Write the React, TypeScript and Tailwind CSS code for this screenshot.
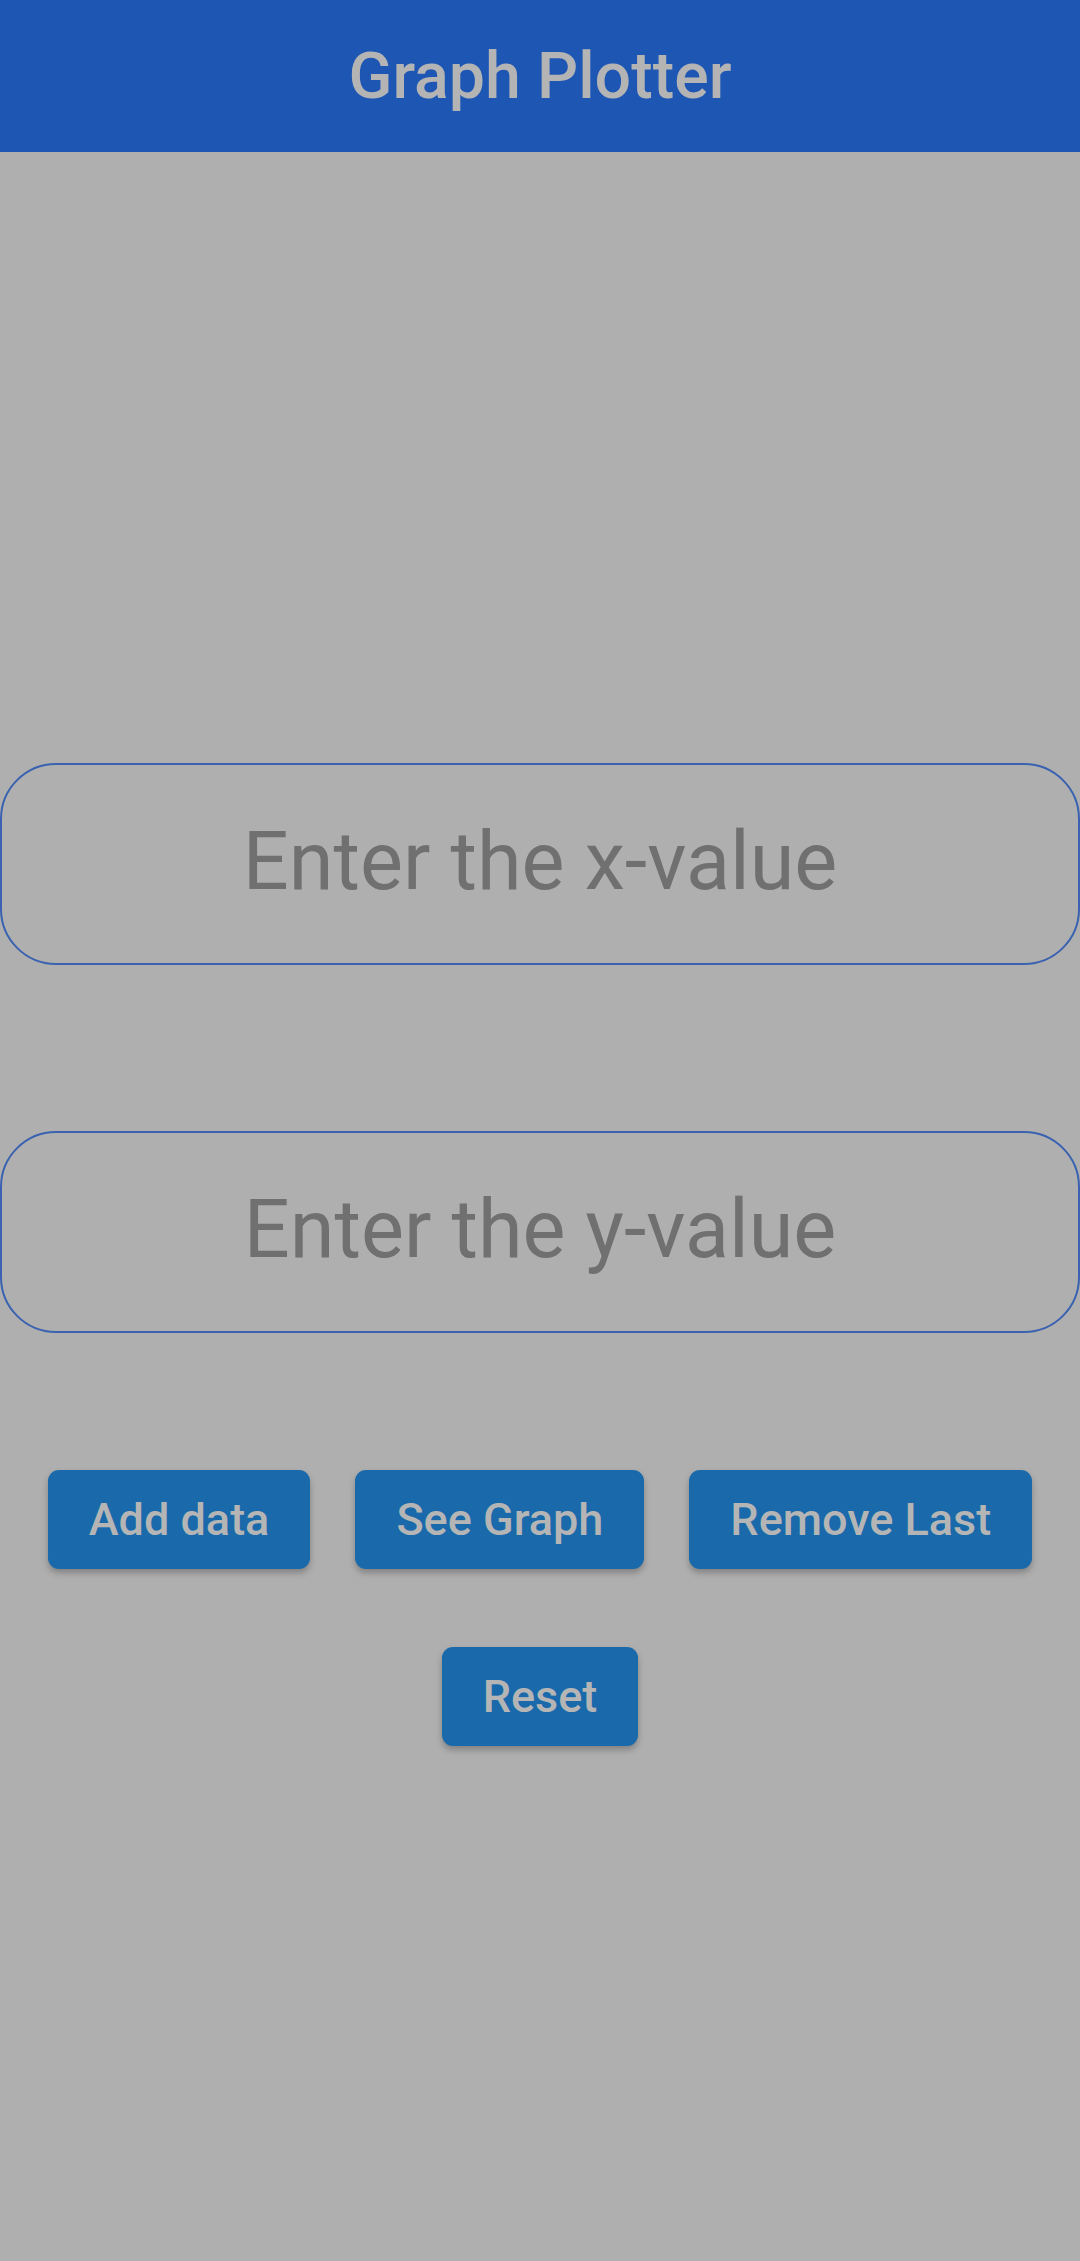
export default function App() {
  const btn =
    "h-[99px] rounded-[11px] bg-[#1a6aab] px-[41px] text-[45px] font-medium text-[#b5b5b5] shadow-[0_4px_6px_rgba(0,0,0,0.25)]";
  const field =
    "h-[202px] w-full rounded-[56px] border-2 border-[#3a62b0] bg-transparent pb-[6px] text-center text-[81px] text-[#707070] outline-none placeholder:text-[#707070]";
  return (
    <div className="min-h-[2261px] bg-[#afafaf] font-['Roboto',sans-serif]">
      <header className="flex h-[152px] items-center justify-center bg-[#1e56b4]">
        <h1 className="text-[64.5px] font-medium text-[#b4b4b4]">Graph Plotter</h1>
      </header>

      <main className="flex flex-col pt-[611px]">
        <input className={field} placeholder="Enter the x-value" />
        <input className={`mt-[166px] ${field}`} placeholder="Enter the y-value" />

        <div className="mt-[137px] flex justify-center gap-[45px]">
          <button className={btn}>Add data</button>
          <button className={btn}>See Graph</button>
          <button className={btn}>Remove Last</button>
        </div>
        <div className="mt-[78px] flex justify-center">
          <button className={btn}>Reset</button>
        </div>
      </main>
    </div>
  );
}
